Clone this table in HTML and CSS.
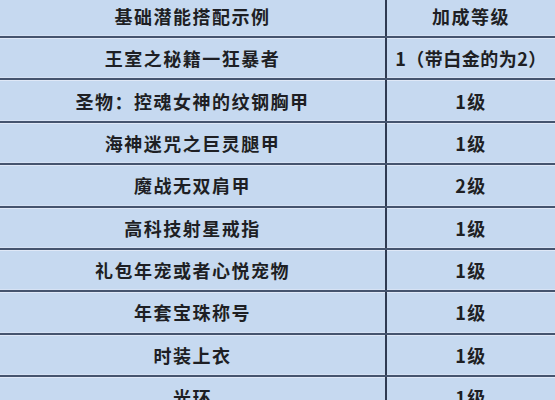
FILE: index.html
```html
<!DOCTYPE html>
<html lang="zh">
<head>
<meta charset="utf-8">
<link rel="stylesheet" href="styles.css">
</head>
<body>
<div class="table">
  <div class="row head"><div class="cell name">基础潜能搭配示例</div><div class="cell lvl">加成等级</div></div>
  <div class="row"><div class="cell name">王室之秘籍一狂暴者</div><div class="cell lvl tight">1（带白金的为2）</div></div>
  <div class="row"><div class="cell name">圣物：控魂女神的纹钢胸甲</div><div class="cell lvl">1级</div></div>
  <div class="row"><div class="cell name">海神迷咒之巨灵腿甲</div><div class="cell lvl">1级</div></div>
  <div class="row"><div class="cell name">魔战无双肩甲</div><div class="cell lvl">2级</div></div>
  <div class="row"><div class="cell name">高科技射星戒指</div><div class="cell lvl">1级</div></div>
  <div class="row"><div class="cell name">礼包年宠或者心悦宠物</div><div class="cell lvl">1级</div></div>
  <div class="row"><div class="cell name">年套宝珠称号</div><div class="cell lvl">1级</div></div>
  <div class="row"><div class="cell name">时装上衣</div><div class="cell lvl">1级</div></div>
  <div class="row"><div class="cell name">光环</div><div class="cell lvl">1级</div></div>
</div>
</body>
</html>
```
FILE: styles.css
```css
html, body {
  margin: 0;
  padding: 0;
  background: #c6d9f0;
  overflow: hidden;
}
.table {
  width: 555px;
  font-family: "Noto Sans CJK SC", "Liberation Sans", sans-serif;
  font-weight: 700;
  font-size: 18px;
  letter-spacing: 1.5px;
  color: #1e1f24;
}
.row {
  display: grid;
  grid-template-columns: 387px 1fr;
  height: 42.375px;
  box-sizing: border-box;
  border-bottom: 2px solid #45546e;
  box-shadow: 0 1px 0 #dfe8f7, 0 -1px 0 #d6e2f4 inset;
}
.row.head {
  height: 38px;
}
.cell {
  display: flex;
  align-items: center;
  justify-content: center;
  line-height: 1;
}
.name {
  border-right: 2px solid #2f3b52;
}
.tight {
  letter-spacing: 0.5px;
}
.head .cell {
  padding-bottom: 5px;
}
```
